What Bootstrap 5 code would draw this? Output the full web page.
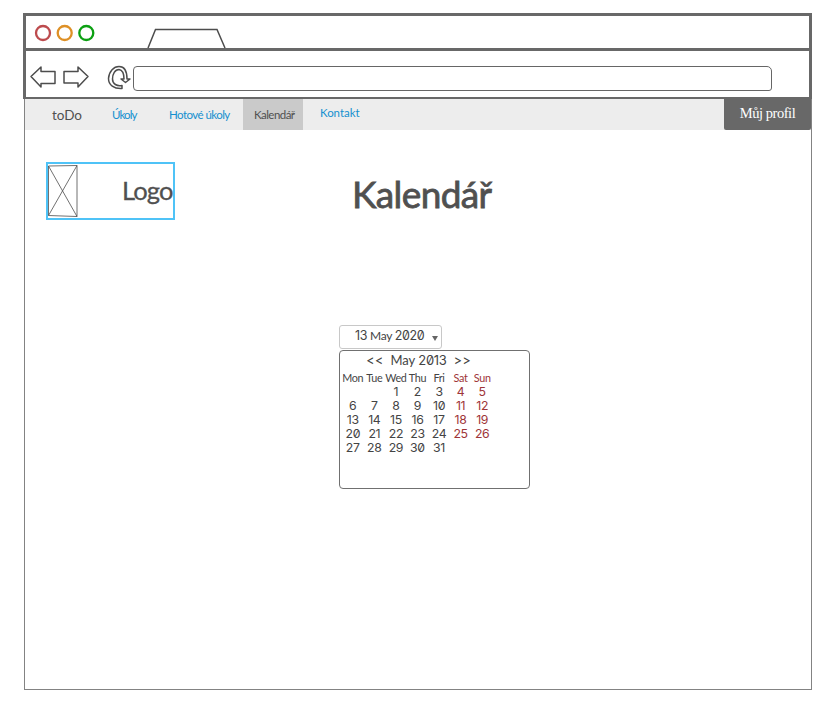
<!DOCTYPE html>
<html lang="cs">
<head>
<meta charset="utf-8">
<meta name="viewport" content="width=device-width, initial-scale=1">
<title>Kalendář</title>
<link href="https://cdn.jsdelivr.net/npm/bootstrap@5.3.0/dist/css/bootstrap.min.css" rel="stylesheet">
<style>
body{background:#fff;color:#505050;font-family:Lato,"Open Sans",sans-serif;padding:13px 23px 0;line-height:1;overflow:hidden}
svg{display:block;flex:none;overflow:visible;fill:none;stroke:#4d4d4d;stroke-width:1.5}
.window{width:789px}
.chrome{height:86px;border:3px solid #686868;border-bottom-width:2px}
.title-row{height:35px;border-bottom:3px solid #686868;padding-left:8.5px}
.tool-row{height:46px;padding:0 0 0 4px}
.address{height:25px;width:639px;border:1.5px solid #666;border-radius:4px 5px 3px 4px;margin-left:3px}
.page{height:591px;border:1px solid #838383;border-top:0;margin:0 0 0 1px}
.menu{height:31px;background:#ededed;font-size:11.5px}
.menu a{display:flex;align-items:center;white-space:nowrap;text-decoration:none;color:#1590cf;height:31px}
.menu .brand{color:#505050;font-size:13.5px;width:87px;padding:2px 0 0 27px;letter-spacing:-.05px}
.menu .tasks{width:57px;letter-spacing:-.9px}
.menu .done{width:74px;letter-spacing:-.55px}
.menu .current{width:60px;background:#cacaca;color:#505050;padding-left:11px;letter-spacing:-.55px}
.menu .contact{padding-left:17px;padding-bottom:3px;letter-spacing:-.05px}
.menu .profile{width:87px;height:31px;background:#686868;color:#fff;font:14.5px "Liberation Serif",serif;letter-spacing:-.45px;justify-content:center;padding-bottom:2px;border-radius:0 0 2px 2px;margin-right:0}
.banner{padding:32px 0 0 21px;height:195px}
.logo-box{width:129px;height:58px;border:2px solid #4fc3f7}
.logo-box svg path{stroke-width:.8}
.logo-text{font-size:25.5px;font-weight:400;letter-spacing:-.9px;width:51px;white-space:nowrap;-webkit-text-stroke:.3px #505050}
.heading{font-size:37px;line-height:42px;font-weight:400;letter-spacing:-.6px;margin:11px 0 0 177px;-webkit-text-stroke:.8px #505050}
.picker{margin-left:314px;width:191px;color:#444}
.num{font-family:Inter,sans-serif;font-feature-settings:"zero";letter-spacing:-.3px}
.date-field{width:103px;height:24px;border:1px solid #c8c8c8;border-radius:3px;font-size:12px;letter-spacing:-.2px;padding:0 3px 1px 15px;white-space:nowrap}
.date-field .num{font-size:12.5px;letter-spacing:-.4px}
.caret{width:0;height:0;border:3.5px solid transparent;border-top:5px solid #666;border-bottom:0;margin-top:3px}
.month{width:191px;height:139px;border:1px solid #707070;border-radius:4px;margin-top:1px}
.month-name{font-size:13px;height:19px;padding-left:26px;width:131px;white-space:nowrap}
.month-name .arrow{font-size:15px}
.dates{width:151px;margin-left:2px;table-layout:fixed;border-collapse:collapse;text-align:center}
.dates th{font-size:10.8px;font-weight:400;height:15px;padding:2px 0 0;letter-spacing:-.3px;vertical-align:middle;text-align:center}
.dates td{height:14px;padding:0;font-size:12.3px;line-height:14px}
.dates tr>:nth-child(n+6){color:#9e3538}
</style>
<script src="https://cdn.jsdelivr.net/npm/bootstrap@5.3.0/dist/js/bootstrap.bundle.min.js"></script>
</head>
<body>
<div class="window">
  <header class="chrome">
    <div class="title-row d-flex align-items-end">
      <svg width="200" height="32" viewBox="0 0 200 32">
        <g stroke-width="2.3"><circle cx="8" cy="17" r="7" stroke="#bd4b4e"/><circle cx="29.700" cy="17" r="7" stroke="#de9026"/><circle cx="51.300" cy="17" r="7" stroke="#0ca012"/></g>
        <path d="M113 32 120.500 13.500H182L190 32"/>
      </svg>
    </div>
    <div class="tool-row d-flex align-items-start">
      <svg width="100" height="46" viewBox="0 0 100 46">
        <path d="M1 25.500 11 16v4.500h14v12H11V36ZM34 20.500h14V16l10 9.500L48 36v-4H34Z" stroke-linejoin="round"/>
        <path d="M92 37.500C84 38 78.500 34 78.500 27.500C79 20 84 15.500 89 15.500C95 15.500 97 20 97 28H100L95.500 31.500 91 28H94C94 22 92 19 89 18.500C85 18.500 82.500 23 82.500 28C82.500 33 87 35.500 92 34.500Z" stroke-linejoin="round"/>
      </svg>
      <div class="address" style="margin-top:15px"></div>
    </div>
  </header>
  <main class="page">
    <nav class="menu d-flex">
      <a class="brand" href="#">toDo</a>
      <a class="tasks" href="#">Úkoly</a>
      <a class="done" href="#">Hotové úkoly</a>
      <a class="current" href="#" aria-current="page">Kalendář</a>
      <a class="contact" href="#">Kontakt</a>
      <a class="profile ms-auto" href="#">Můj profil</a>
    </nav>
    <section class="banner d-flex align-items-start">
      <div class="logo-box d-flex align-items-center justify-content-between">
        <svg width="29" height="52" viewBox="0 0 29 52"><path d="M.5 1 29 .5V51.500L.5 50.500ZM.5 1 29 51.500M29 .5.5 50.500"/></svg>
        <span class="logo-text">Logo</span>
      </div>
      <h1 class="heading">Kalendář</h1>
    </section>
    <section class="picker">
      <div class="date-field d-flex align-items-center justify-content-between"><span><span class="num">13</span> May <span class="num">2020</span></span><span class="caret"></span></div>
      <div class="month">
        <div class="month-name d-flex align-items-center justify-content-between"><span class="arrow">&lt;&lt;</span><span>May <span class="num">2013</span></span><span class="arrow">&gt;&gt;</span></div>
        <table class="dates">
          <thead><tr><th>Mon</th><th>Tue</th><th>Wed</th><th>Thu</th><th>Fri</th><th>Sat</th><th>Sun</th></tr></thead>
          <tbody class="num">
            <tr><td></td><td></td><td>1</td><td>2</td><td>3</td><td>4</td><td>5</td></tr>
            <tr><td>6</td><td>7</td><td>8</td><td>9</td><td>10</td><td>11</td><td>12</td></tr>
            <tr><td>13</td><td>14</td><td>15</td><td>16</td><td>17</td><td>18</td><td>19</td></tr>
            <tr><td>20</td><td>21</td><td>22</td><td>23</td><td>24</td><td>25</td><td>26</td></tr>
            <tr><td>27</td><td>28</td><td>29</td><td>30</td><td>31</td><td></td><td></td></tr>
          </tbody>
        </table>
      </div>
    </section>
  </main>
</div>
</body>
</html>
